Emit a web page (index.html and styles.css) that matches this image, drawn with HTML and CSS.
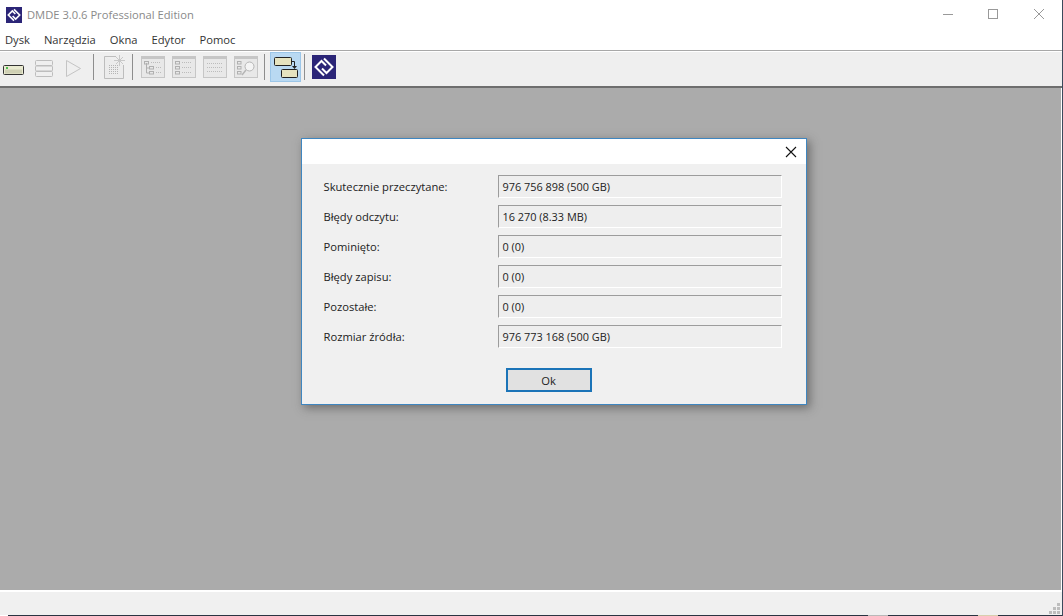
FILE: index.html
```html
<!DOCTYPE html>
<html lang="pl">
<head>
    <meta charset="UTF-8">
    <meta name="viewport" content="width=device-width, initial-scale=1.0">
    <title>DMDE 3.0.6 Professional Edition</title>
    <link rel="stylesheet" href="styles.css">
</head>
<body>
    <div class="app">
        <div class="titlebar">
            <svg class="app-icon" width="16" height="16" viewBox="0 0 24 24">
                <rect width="24" height="24" fill="#2b2577"/>
                <path d="M12 3.5 L20.5 12 L14.5 18 L10 13.5 M12 20.5 L3.5 12 L9.5 6 L14 10.5" fill="none" stroke="#fff" stroke-width="2.4"/>
            </svg>
            <span class="app-title">DMDE 3.0.6 Professional Edition</span>
            <div class="win-btns">
                <svg width="46" height="29" viewBox="0 0 46 29"><path d="M19 14.5 H29" stroke="#999" stroke-width="1"/></svg>
                <svg width="46" height="29" viewBox="0 0 46 29"><rect x="18.5" y="9.5" width="9" height="9" fill="none" stroke="#999"/></svg>
                <svg width="46" height="29" viewBox="0 0 46 29"><path d="M18 9 L28 19 M28 9 L18 19" stroke="#999" stroke-width="1"/></svg>
            </div>
        </div>

        <div class="menubar">
            <span>Dysk</span>
            <span>Narzędzia</span>
            <span>Okna</span>
            <span>Edytor</span>
            <span>Pomoc</span>
        </div>

        <div class="toolbar">
            <div class="tool">
                <svg width="24" height="24" viewBox="0 0 24 24">
                    <rect x="1.5" y="10.5" width="20" height="9" rx="1" fill="#e9ead0" stroke="#333"/>
                    <rect x="3" y="14.5" width="17" height="4" fill="#cfd0b4"/>
                    <rect x="4" y="12" width="2" height="2" fill="#4fc04f"/>
                </svg>
            </div>
            <div class="tool">
                <svg width="24" height="24" viewBox="0 0 24 24" fill="none" stroke="#bdbdbd">
                    <rect x="2.5" y="5.5" width="17" height="5" rx="1"/>
                    <rect x="2.5" y="11" width="17" height="5" rx="1"/>
                    <rect x="2.5" y="16.5" width="17" height="5" rx="1"/>
                </svg>
            </div>
            <div class="tool">
                <svg width="24" height="24" viewBox="0 0 24 24">
                    <path d="M2.5 5.5 L16.5 13.5 L2.5 21.5 Z" fill="none" stroke="#c4c4c4"/>
                </svg>
            </div>
            <div class="sep sep-wide"></div>
            <div class="tool tool-narrow">
                <svg width="24" height="24" viewBox="0 0 24 24">
                    <path d="M0.5 1.5 H12 M0.5 1.5 V23.5 H19.5 V10" fill="#ececec" stroke="#bdbdbd"/>
                    <path d="M5 10.5h1M7 10.5h1M9 10.5h1M11 10.5h1M13 10.5h1M5 12.5h1M7 12.5h1M9 12.5h1M11 12.5h1M13 12.5h1M5 14.5h1M7 14.5h1M9 14.5h1M11 14.5h1M13 14.5h1M5 16.5h1M7 16.5h1M9 16.5h1M11 16.5h1M13 16.5h1M5 18.5h1M7 18.5h1M9 18.5h1M11 18.5h1M13 18.5h1" stroke="#b5b5b5"/>
                    <path d="M15.5 0 V11 M10 5.5 H21 M12 2 L19 9 M19 2 L12 9" stroke="#c8c8c8"/>
                </svg>
            </div>
            <div class="sep sep-mid"></div>
            <div class="tool">
                <svg width="24" height="24" viewBox="0 0 24 24">
                    <rect x="0.5" y="1.5" width="23" height="21" fill="#e8e8e8" stroke="#c6c6c6"/>
                    <rect x="1" y="2" width="22" height="2" fill="#c6c6c6"/>
                    <path d="M5.5 8 V18 H9 M5.5 13 H9" fill="none" stroke="#b0b0b0"/>
                    <rect x="3.5" y="6.5" width="4" height="2.5" fill="none" stroke="#b0b0b0"/>
                    <rect x="8.5" y="11.5" width="4" height="2.5" fill="none" stroke="#b0b0b0"/>
                    <rect x="8.5" y="16.5" width="4" height="2.5" fill="none" stroke="#b0b0b0"/>
                    <path d="M10 7.5h10M15 12.5h5M15 17.5h5" stroke="#bcbcbc" stroke-dasharray="1 1"/>
                </svg>
            </div>
            <div class="tool">
                <svg width="24" height="24" viewBox="0 0 24 24">
                    <rect x="0.5" y="1.5" width="23" height="21" fill="#e8e8e8" stroke="#c6c6c6"/>
                    <rect x="1" y="2" width="22" height="2" fill="#c6c6c6"/>
                    <rect x="3.5" y="6.5" width="4" height="2.5" fill="none" stroke="#b0b0b0"/>
                    <rect x="3.5" y="11.5" width="4" height="2.5" fill="none" stroke="#b0b0b0"/>
                    <rect x="3.5" y="16.5" width="4" height="2.5" fill="none" stroke="#b0b0b0"/>
                    <path d="M10 7.5h10M10 12.5h10M10 17.5h10" stroke="#bcbcbc" stroke-dasharray="1 1"/>
                </svg>
            </div>
            <div class="tool">
                <svg width="24" height="24" viewBox="0 0 24 24">
                    <rect x="0.5" y="1.5" width="23" height="21" fill="#e8e8e8" stroke="#c6c6c6"/>
                    <rect x="1" y="2" width="22" height="2" fill="#c6c6c6"/>
                    <path d="M4 8.5h16M4 12.5h16M4 16.5h16" stroke="#bcbcbc" stroke-dasharray="1 1"/>
                </svg>
            </div>
            <div class="tool">
                <svg width="24" height="24" viewBox="0 0 24 24">
                    <rect x="0.5" y="1.5" width="23" height="21" fill="#e8e8e8" stroke="#c6c6c6"/>
                    <rect x="1" y="2" width="22" height="2" fill="#c6c6c6"/>
                    <rect x="3.5" y="6.5" width="3.5" height="2.5" fill="none" stroke="#b0b0b0"/>
                    <rect x="3.5" y="11.5" width="3.5" height="2.5" fill="none" stroke="#b0b0b0"/>
                    <rect x="3.5" y="16.5" width="3.5" height="2.5" fill="none" stroke="#b0b0b0"/>
                    <circle cx="15.5" cy="11.5" r="4.5" fill="#f4f4f4" stroke="#b5b5b5"/>
                    <path d="M12 15 L8 20" stroke="#b5b5b5" stroke-width="1.5"/>
                </svg>
            </div>
            <div class="sep sep-active"></div>
            <div class="tool tool-on">
                <svg width="26" height="26" viewBox="0 0 26 26">
                    <rect x="1.5" y="3.5" width="17" height="8" rx="1" fill="#e6e3bf" stroke="#222"/>
                    <rect x="8.5" y="15.5" width="16" height="8" rx="1" fill="#e6e3bf" stroke="#222"/>
                    <path d="M18 7.5 H21.5 V13" fill="none" stroke="#222"/>
                    <path d="M19 12 H24 L21.5 15 Z" fill="#222"/>
                </svg>
            </div>
            <div class="sep sep-logo"></div>
            <div class="tool">
                <svg width="24" height="24" viewBox="0 0 24 24">
                    <rect width="24" height="24" fill="#2b2577"/>
                    <path d="M12 3.5 L20.5 12 L14.5 18 L10 13.5 M12 20.5 L3.5 12 L9.5 6 L14 10.5" fill="none" stroke="#fff" stroke-width="2"/>
                </svg>
            </div>
        </div>

        <div class="workspace">
            <div class="dialog">
                <div class="dialog-head">
                    <svg width="12" height="12" viewBox="0 0 12 12"><path d="M1 1 L11 11 M11 1 L1 11" stroke="#111" stroke-width="1.1"/></svg>
                </div>
                <div class="dialog-body">
                    <div class="stats">
                        <span class="stat-label">Skutecznie przeczytane:</span><div class="stat-value">976 756 898 (500 GB)</div>
                        <span class="stat-label">Błędy odczytu:</span><div class="stat-value">16 270 (8.33 MB)</div>
                        <span class="stat-label">Pominięto:</span><div class="stat-value">0 (0)</div>
                        <span class="stat-label">Błędy zapisu:</span><div class="stat-value">0 (0)</div>
                        <span class="stat-label">Pozostałe:</span><div class="stat-value">0 (0)</div>
                        <span class="stat-label">Rozmiar źródła:</span><div class="stat-value">976 773 168 (500 GB)</div>
                    </div>
                    <button class="ok-btn">Ok</button>
                </div>
            </div>
        </div>

        <div class="statusbar">
            <svg class="grip" width="12" height="12" viewBox="0 0 12 12" fill="#bdbdbd">
                <rect x="8" y="0" width="3" height="3"/>
                <rect x="4" y="4" width="3" height="3"/>
                <rect x="8" y="4" width="3" height="3"/>
                <rect x="0" y="8" width="3" height="3"/>
                <rect x="4" y="8" width="3" height="3"/>
                <rect x="8" y="8" width="3" height="3"/>
            </svg>
        </div>
        <div class="taskbar-edge">
            <span class="edge-gray"></span>
            <span class="edge-tan"></span>
        </div>
    </div>
</body>
</html>
```

FILE: styles.css
```css
* {
    margin: 0;
    padding: 0;
    box-sizing: border-box;
}

html, body {
    height: 100%;
    overflow: hidden;
}

body {
    font-family: 'Open Sans', 'Noto Sans', sans-serif;
    font-size: 11.2px;
    color: #1c1c1c;
    background: #fff;
}

.app {
    height: 616px;
    display: flex;
    flex-direction: column;
    border-right: 1px solid #3a4a5c;
}

/* Title bar */
.titlebar {
    height: 29px;
    flex: none;
    display: flex;
    align-items: center;
    padding-left: 6px;
    background: #fff;
}

.app-title {
    margin-left: 5px;
    color: #8a8a8a;
}

.win-btns {
    margin-left: auto;
    display: flex;
}

/* Menu */
.menubar {
    height: 22px;
    flex: none;
    display: flex;
    gap: 14px;
    align-items: center;
    padding-left: 5px;
    background: #fff;
    border-bottom: 1px solid #a8a8a8;
    color: #333;
}

/* Toolbar */
.toolbar {
    height: 37px;
    flex: none;
    display: flex;
    align-items: flex-start;
    background: #efefef;
    border-top: 1px solid #fff;
    border-bottom: 2px solid #6e6e6e;
}

.tool {
    width: 31px;
    height: 30px;
    display: flex;
    align-items: center;
    padding-left: 2px;
}

.tool-narrow {
    width: 30px;
}

.tool-on {
    background: #b9d9f2;
    border: 1px solid #9cc6e8;
}

.sep {
    width: 1px;
    height: 26px;
    margin-top: 2px;
    background: #8e8e8e;
}

.sep-wide {
    margin-right: 8px;
}

.sep-mid {
    margin-right: 6px;
}

.sep-active {
    margin-left: 1px;
    margin-right: 5px;
}

.sep-logo {
    margin-left: 3px;
    margin-right: 5px;
}

/* Workspace */
.workspace {
    flex: 1;
    background: #ababab;
    display: flex;
    justify-content: center;
    align-items: flex-start;
    margin-right: 1px;
    padding: 50px 0 0 46px;
}

.dialog {
    width: 506px;
    height: 267px;
    display: flex;
    flex-direction: column;
    background: #f0f0f0;
    border: 1px solid #3f86c0;
    box-shadow: 3px 3px 9px rgba(60, 60, 60, 0.55);
}

.dialog-head {
    height: 25px;
    flex: none;
    display: flex;
    align-items: center;
    justify-content: flex-end;
    padding-right: 9px;
    background: #fff;
}

.dialog-body {
    flex: 1;
    display: flex;
    flex-direction: column;
    padding: 11px 24px 0 22px;
}

.stats {
    display: grid;
    grid-template-columns: 174px 1fr;
    row-gap: 7px;
}

.stat-label {
    line-height: 23px;
    color: #222;
}

.stat-value {
    height: 23px;
    line-height: 21px;
    padding-left: 4px;
    font-size: 10.9px;
    background: #eeeeee;
    border: 1px solid;
    border-color: #9c9c9c #fff #fff #9c9c9c;
    color: #222;
}

.ok-btn {
    width: 86px;
    height: 24px;
    margin: 20px 0 0 182px;
    font: inherit;
    color: #222;
    background: #e1e1e1;
    border: 2px solid #1b74b8;
}

/* Status bar */
.statusbar {
    height: 25px;
    flex: none;
    display: flex;
    justify-content: flex-end;
    align-items: flex-end;
    padding-right: 1px;
    background: #f0f0f0;
    border-top: 2px solid #fff;
}

.taskbar-edge {
    height: 1px;
    flex: none;
    display: flex;
    margin-left: 8px;
    background: #2a3442;
}

.edge-gray {
    width: 20px;
    margin-left: 860px;
    background: #b9b9b9;
}

.edge-tan {
    width: 20px;
    margin-left: 90px;
    background: #d8cfae;
}
```
